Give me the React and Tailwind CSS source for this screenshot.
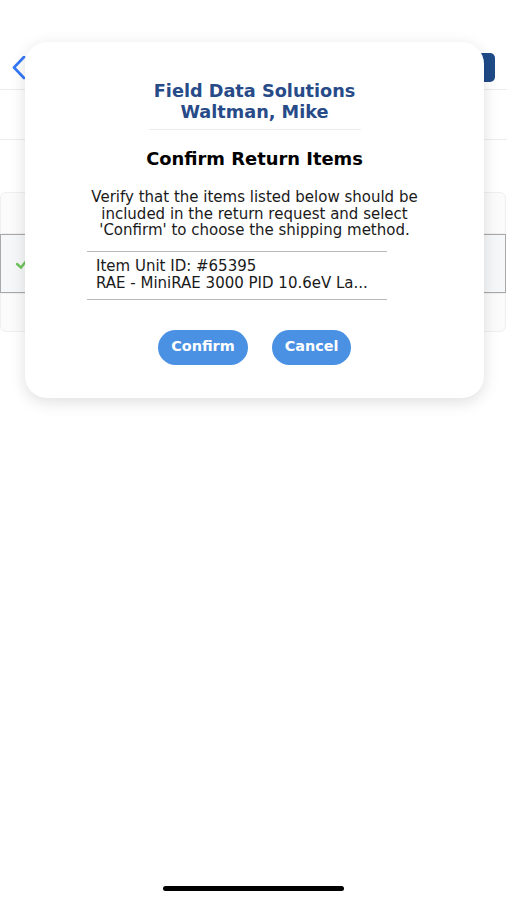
import React from "react";

export default function App() {
  return (
    <div
      className="relative w-full h-[900px] bg-white overflow-hidden flex flex-col"
      style={{ fontFamily: '"DejaVu Sans", "Liberation Sans", Arial, sans-serif' }}
    >
      {/* Background page */}
      <div className="h-[90px] border-b border-[#ececec] flex items-start justify-between pt-[56px]">
        <svg width="26" height="24" viewBox="0 0 26 24" className="ml-[6px]">
          <path d="M18 1 L8 11.5 L18 22" fill="none" stroke="#3478f6" strokeWidth="2.6" strokeLinecap="round" strokeLinejoin="round" />
        </svg>
        <div className="w-[60px] h-[29px] -mt-[3px] mr-[12px] rounded-[5px] bg-[#1f4b88]" />
      </div>
      <div className="h-[50px] border-b border-[#ececec]" />
      <div className="mt-[52px] flex flex-col pr-[1px]">
        <div className="h-[42px] rounded-t-[6px] border border-[#efefef] bg-[#fbfbfb]" />
        <div className="h-[59px] border border-[#a9a9a9] bg-[#f6f7f9] flex items-center pl-[14px]">
          <svg width="14" height="12" viewBox="0 0 14 12">
            <path d="M2 6 L6 9.5 L12 2" fill="none" stroke="#6cc65a" strokeWidth="2.4" strokeLinecap="round" />
          </svg>
        </div>
        <div className="h-[39px] rounded-b-[6px] border border-[#efefef] bg-[#fbfbfb]" />
      </div>

      <div className="mt-auto mb-[9px] self-center w-[181px] h-[5px] rounded-full bg-black" />

      {/* Modal */}
      <div className="absolute left-[25px] top-[42px] w-[459px] h-[356px] bg-white rounded-[22px] shadow-[0_4px_16px_rgba(0,0,0,0.13)] flex flex-col pt-[39px]">
        <div className="text-center font-bold text-[17.7px] leading-[21px] text-[#274b88]">
          <div>Field Data Solutions</div>
          <div>Waltman, Mike</div>
        </div>
        <div className="self-center mt-[6px] w-[212px] h-px bg-[#ececec]" />
        <div className="mt-[19px] text-center font-bold text-[17.9px] leading-[20px] text-black">
          Confirm Return Items
        </div>
        <div className="mt-[20px] text-center text-[15px] leading-[16.5px] text-[#1a1a1a]">
          <div>Verify that the items listed below should be</div>
          <div>included in the return request and select</div>
          <div>'Confirm' to choose the shipping method.</div>
        </div>
        <div className="mt-[12px] ml-[62px] w-[300px] border-y border-[#b9b9b9] pt-[6px] pb-[7px] pl-[9px] text-[15px] leading-[17px] text-[#1a1a1a] whitespace-nowrap">
          <div>Item Unit ID: #65395</div>
          <div>RAE - MiniRAE 3000 PID 10.6eV La...</div>
        </div>
        <div className="mt-[30px] flex justify-center gap-[24px]">
          <button className="w-[90px] h-[35px] rounded-full bg-[#4a91e3] text-white font-bold text-[14.4px]">
            Confirm
          </button>
          <button className="w-[79px] h-[35px] rounded-full bg-[#4a91e3] text-white font-bold text-[14.4px]">
            Cancel
          </button>
        </div>
      </div>
    </div>
  );
}
